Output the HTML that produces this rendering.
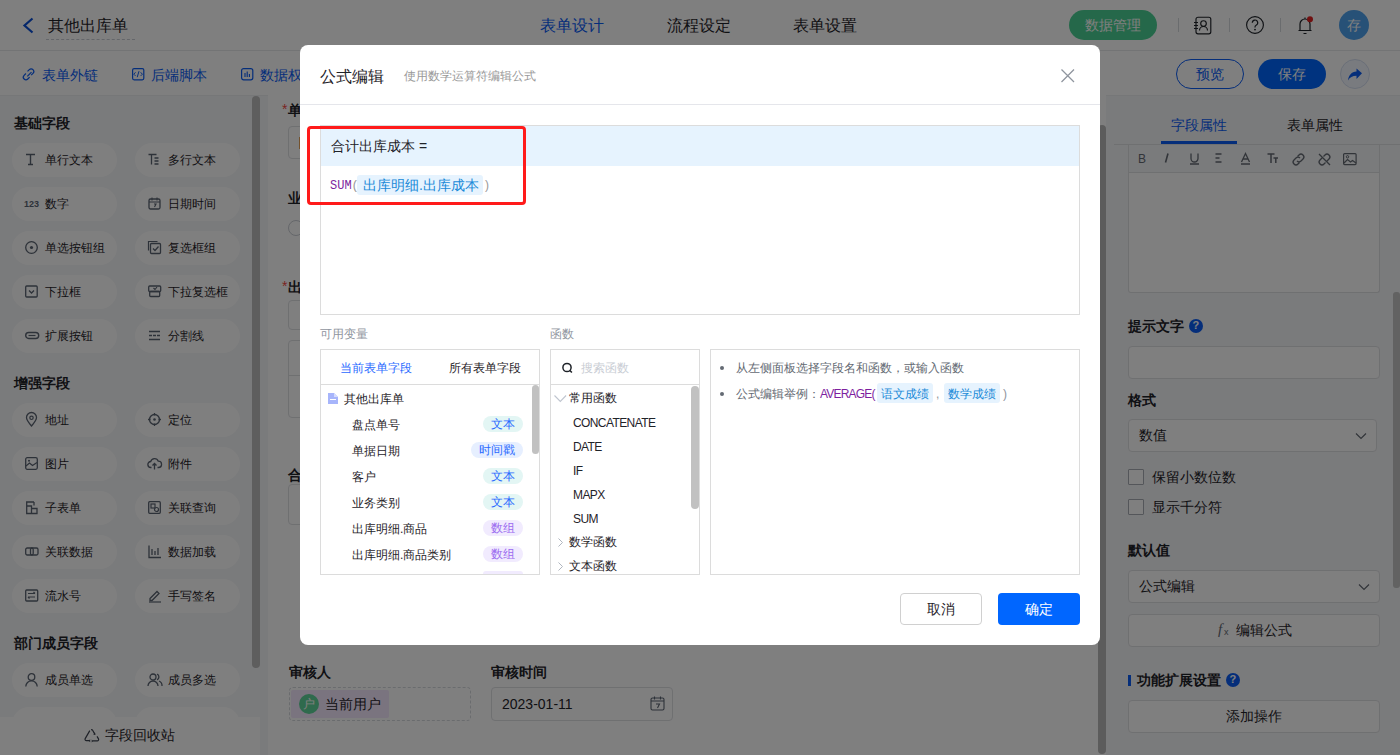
<!DOCTYPE html>
<html><head><meta charset="utf-8">
<style>
*{box-sizing:border-box;margin:0;padding:0}
html,body{width:1400px;height:755px;overflow:hidden;background:#fff;font-family:"Liberation Sans",sans-serif;color:#1f2329}
.a{position:absolute}
.t{position:absolute;white-space:nowrap;line-height:1}
svg{position:absolute;overflow:visible}
#hdr{left:0;top:0;width:1400px;height:51px;background:#fff;border-bottom:1px solid #e6e8eb}
#tb{left:0;top:51px;width:1400px;height:45px;background:#fff}
#side{left:0;top:95px;width:268px;height:660px;background:#f5f6f8;box-shadow:inset 0 1px 0 #eceef1}
.sec{position:absolute;left:14px;font-size:14px;font-weight:bold;color:#1f2329;line-height:14px}
.pill{position:absolute;width:105px;height:34px;border-radius:17px;background:#fff}
.pill span{position:absolute;left:33px;top:11px;font-size:12px;line-height:12px;color:#1f2329;white-space:nowrap}
.pill svg{left:13px;top:10px}
#main{left:268px;top:95px;width:832px;height:660px;background:#fff}
#right{left:1106px;top:95px;width:294px;height:660px;background:#f5f6f8;box-shadow:inset 0 1px 0 #eceef1}
#ov{left:0;top:0;width:1400px;height:755px;background:rgba(0,0,0,.5)}
#modal{left:300px;top:45px;width:800px;height:600px;background:#fff;border-radius:8px}
</style></head><body>
<div id="hdr" class="a">
<svg width="12" height="16" style="left:22px;top:17px"><path d="M10.5 1.5 L2.5 8.5 L10.5 15.5" fill="none" stroke="#0a4fd6" stroke-width="2.2"/></svg>
<div class="t" style="left:48px;top:18px;font-size:16px;color:#1f2329">其他出库单</div>
<div class="a" style="left:46px;top:39px;width:89px;border-top:1px dashed #c9cdd4"></div>
<div class="t" style="left:540px;top:18px;font-size:16px;color:#0a5cf5">表单设计</div>
<div class="t" style="left:667px;top:18px;font-size:16px;color:#1f2329">流程设定</div>
<div class="t" style="left:793px;top:18px;font-size:16px;color:#1f2329">表单设置</div>
<div class="a" style="left:1069px;top:10px;width:88px;height:30px;border-radius:15px;background:#4bd194"></div>
<div class="t" style="left:1085px;top:18px;font-size:14px;color:#fff">数据管理</div>
<div class="a" style="left:1178px;top:18px;width:1px;height:14px;background:#d5d8dc"></div>
<div class="a" style="left:1229px;top:18px;width:1px;height:14px;background:#d5d8dc"></div>
<div class="a" style="left:1280px;top:18px;width:1px;height:14px;background:#d5d8dc"></div>
<svg width="20" height="20" style="left:1193px;top:16px"><rect x="3" y="1.2" width="14.8" height="16.6" rx="2" stroke="#1f2329" stroke-width="1.15" fill="none"/><path d="M1 6.5h4M1 9.5h4M1 12.5h4" stroke="#1f2329" stroke-width="1.2"/><circle cx="10.5" cy="7.5" r="2.8" stroke="#1f2329" stroke-width="1.15" fill="none"/><path d="M6.5 14.5a4 4 0 0 1 8 0" stroke="#1f2329" stroke-width="1.15" fill="none"/></svg>
<svg width="20" height="20" style="left:1245px;top:15px"><circle cx="10" cy="10" r="8.4" stroke="#1f2329" stroke-width="1.15" fill="none"/><path d="M7.3 7.7a2.7 2.7 0 1 1 3.8 2.5c-0.8 0.4-1.1 0.9-1.1 1.8v0.6" stroke="#1f2329" stroke-width="1.2" fill="none"/><circle cx="10" cy="14.6" r="0.9" fill="#1f2329"/></svg>
<svg width="20" height="20" style="left:1295px;top:15px"><path d="M3.5 15.5h13M5 15.5V9a5 5 0 0 1 10 0v6.5M8.5 18.5h3M10 2.5v1.5" stroke="#1f2329" stroke-width="1.2" fill="none"/><circle cx="15" cy="4.3" r="3" fill="#e02020"/></svg>
<div class="a" style="left:1339px;top:10px;width:30px;height:30px;border-radius:15px;background:#4ea2ee"></div>
<div class="t" style="left:1347px;top:18px;font-size:14px;color:#fff">存</div>
</div>
<div id="tb" class="a">
<svg width="14" height="14" style="left:22px;top:17px"><path d="M5.2 4.2l1.8-1.8a2.6 2.6 0 0 1 3.7 3.7L8.9 7.9M7.3 10l-1.8 1.8a2.6 2.6 0 0 1-3.7-3.7L3.6 6.3M5 9.2l4.2-4.2" stroke="#0a5cf5" stroke-width="1.2" fill="none" transform="translate(0.3,-0.8)"/></svg>
<svg width="13" height="13" style="left:132px;top:17px"><rect x="0.6" y="0.6" width="11.2" height="11.2" rx="1.5" stroke="#0a5cf5" stroke-width="1.2" fill="none"/><path d="M3.5 4.3L1.8 6.2l1.7 1.7M8.7 4.3l1.7 1.9-1.7 1.7M7 3.2L5.2 9.2" stroke="#0a5cf5" stroke-width="1" fill="none"/></svg>
<svg width="13" height="13" style="left:241px;top:17px"><rect x="0.6" y="0.6" width="11.2" height="11.2" rx="2" stroke="#0a5cf5" stroke-width="1.2" fill="none"/><path d="M4 5v4M6.2 3.5v5.5M8.4 6v3" stroke="#0a5cf5" stroke-width="1.1" fill="none"/></svg>
<div class="t" style="left:42px;top:17px;font-size:14px;color:#0a5cf5">表单外链</div>
<div class="t" style="left:151px;top:17px;font-size:14px;color:#0a5cf5">后端脚本</div>
<div class="t" style="left:260px;top:17px;font-size:14px;color:#0a5cf5">数据权限</div>
<div class="a" style="left:1176px;top:8px;width:68px;height:30px;border-radius:15px;border:1px solid #0a5cf5"></div>
<div class="t" style="left:1196px;top:16px;font-size:14px;color:#0a5cf5">预览</div>
<div class="a" style="left:1258px;top:8px;width:68px;height:30px;border-radius:15px;background:#0066ff"></div>
<div class="t" style="left:1278px;top:16px;font-size:14px;color:#fff">保存</div>
<div class="a" style="left:1340px;top:8px;width:30px;height:30px;border-radius:15px;background:#f2f7ff;border:1px solid #d5def0"></div>
<svg width="16" height="14" style="left:1347px;top:17px"><path d="M15 5.3L9.5 0.5v3C4.5 3.8 1.5 7.3 1 12.5c1.8-3.2 4.5-4.7 8.5-4.7v3.2z" fill="#0a5cf5"/></svg>
</div>
<div id="side" class="a">
<div class="sec" style="top:21px">基础字段</div>
<div class="sec" style="top:281px">增强字段</div>
<div class="sec" style="top:541px">部门成员字段</div>
<div class="pill" style="left:12px;top:48px"><svg width="14" height="14" style="left:13px;top:10px"><path d="M1 1.5h9M5.5 1.5v10M3 11.5h5" stroke="#5b6472" stroke-width="1.4" fill="none"/></svg><span>单行文本</span></div>
<div class="pill" style="left:135px;top:48px"><svg width="14" height="14" style="left:13px;top:10px"><path d="M0.5 1.5h8M3.5 1.5v10M6.5 5h4M6.5 8h4M6.5 11h4" stroke="#5b6472" stroke-width="1.3" fill="none"/></svg><span>多行文本</span></div>
<div class="pill" style="left:12px;top:92px"><svg width="14" height="14" style="left:13px;top:10px"><text x="-1" y="10" font-size="9" font-weight="bold" fill="#5b6472" font-family="Liberation Sans">123</text></svg><span>数字</span></div>
<div class="pill" style="left:135px;top:92px"><svg width="14" height="14" style="left:13px;top:10px"><rect x="1" y="2" width="11" height="10" rx="1.5" stroke="#5b6472" stroke-width="1.3" fill="none"/><path d="M1 5h11M4 0.5v3M9 0.5v3M6 7h2l-1.5 3" stroke="#5b6472" stroke-width="1.1" fill="none"/></svg><span>日期时间</span></div>
<div class="pill" style="left:12px;top:136px"><svg width="14" height="14" style="left:13px;top:10px"><circle cx="6.5" cy="6.5" r="5.8" stroke="#5b6472" stroke-width="1.3" fill="none"/><circle cx="6.5" cy="6.5" r="1.6" fill="#5b6472"/></svg><span>单选按钮组</span></div>
<div class="pill" style="left:135px;top:136px"><svg width="14" height="14" style="left:13px;top:10px"><path d="M0.5 9.5v-9h9" stroke="#5b6472" stroke-width="1.2" fill="none"/><rect x="2.5" y="2.5" width="10" height="10" rx="1" stroke="#5b6472" stroke-width="1.3" fill="none"/><path d="M5 7.5l2 2 3.5-4" stroke="#5b6472" stroke-width="1.3" fill="none"/></svg><span>复选框组</span></div>
<div class="pill" style="left:12px;top:180px"><svg width="14" height="14" style="left:13px;top:10px"><rect x="0.7" y="1" width="11.5" height="11" rx="1" stroke="#5b6472" stroke-width="1.3" fill="none"/><path d="M4 5.5l2.5 2.5 2.5-2.5" stroke="#5b6472" stroke-width="1.3" fill="none"/></svg><span>下拉框</span></div>
<div class="pill" style="left:135px;top:180px"><svg width="14" height="14" style="left:13px;top:10px"><rect x="0.7" y="1" width="12" height="5.5" rx="1" stroke="#5b6472" stroke-width="1.3" fill="none"/><rect x="1.7" y="6.5" width="10" height="5" rx="1" stroke="#5b6472" stroke-width="1.3" fill="none"/><path d="M5.5 3l1.5 1.5 2-2.5" stroke="#5b6472" stroke-width="1.1" fill="none"/></svg><span>下拉复选框</span></div>
<div class="pill" style="left:12px;top:224px"><svg width="14" height="14" style="left:13px;top:10px"><rect x="0.7" y="3.5" width="13" height="6" rx="3" stroke="#5b6472" stroke-width="1.4" fill="none"/><path d="M3.5 6.5h7" stroke="#5b6472" stroke-width="1.2"/></svg><span>扩展按钮</span></div>
<div class="pill" style="left:135px;top:224px"><svg width="14" height="14" style="left:13px;top:10px"><path d="M1 2.5h11M1 10.5h11M1 6.5h3M5 6.5h3M9 6.5h3" stroke="#5b6472" stroke-width="1.3" fill="none"/></svg><span>分割线</span></div>
<div class="pill" style="left:12px;top:308px"><svg width="14" height="14" style="left:13px;top:10px"><path d="M6.5 13c-3-3.5-5-6-5-8.5a5 5 0 0 1 10 0c0 2.5-2 5-5 8.5z" stroke="#5b6472" stroke-width="1.3" fill="none"/><circle cx="6.5" cy="4.8" r="1.7" stroke="#5b6472" stroke-width="1.2" fill="none"/></svg><span>地址</span></div>
<div class="pill" style="left:135px;top:308px"><svg width="14" height="14" style="left:13px;top:10px"><circle cx="6.5" cy="6.5" r="5" stroke="#5b6472" stroke-width="1.3" fill="none"/><circle cx="6.5" cy="6.5" r="1.3" fill="#5b6472"/><path d="M6.5 0v2.5M6.5 10.5v2.5M0 6.5h2.5M10.5 6.5h2.5" stroke="#5b6472" stroke-width="1.3"/></svg><span>定位</span></div>
<div class="pill" style="left:12px;top:352px"><svg width="14" height="14" style="left:13px;top:10px"><rect x="0.7" y="0.7" width="11.6" height="11.6" rx="1.5" stroke="#5b6472" stroke-width="1.3" fill="none"/><path d="M1 9l3.5-3 3 2.5 4.5-3" stroke="#5b6472" stroke-width="1.2" fill="none"/><circle cx="4" cy="3.8" r="1" fill="#5b6472"/></svg><span>图片</span></div>
<div class="pill" style="left:135px;top:352px"><svg width="14" height="14" style="left:13px;top:10px"><path d="M3.5 10.5h-0.5a3 3 0 0 1 -0.3-6a4 4 0 0 1 7.6-0.3a3 3 0 0 1 0.2 6.3h-1" stroke="#5b6472" stroke-width="1.3" fill="none"/><path d="M6.5 12.5v-6M4.5 8.5l2-2 2 2" stroke="#5b6472" stroke-width="1.3" fill="none"/></svg><span>附件</span></div>
<div class="pill" style="left:12px;top:396px"><svg width="14" height="14" style="left:13px;top:10px"><path d="M9 1H1.7v11.5H12V7.5H6.5v5M1.7 5H6.5v7.5" stroke="#5b6472" stroke-width="1.3" fill="none"/><path d="M9 1v3.5" stroke="#5b6472" stroke-width="1.3"/></svg><span>子表单</span></div>
<div class="pill" style="left:135px;top:396px"><svg width="14" height="14" style="left:13px;top:10px"><rect x="0.7" y="0.7" width="11.6" height="11.6" rx="1" stroke="#5b6472" stroke-width="1.3" fill="none"/><rect x="3" y="3" width="4" height="4" stroke="#5b6472" stroke-width="1.2" fill="none"/><circle cx="8.5" cy="8.5" r="2" stroke="#5b6472" stroke-width="1.2" fill="none"/></svg><span>关联查询</span></div>
<div class="pill" style="left:12px;top:440px"><svg width="14" height="14" style="left:13px;top:10px"><rect x="0.7" y="3" width="7.5" height="7" rx="1.5" stroke="#5b6472" stroke-width="1.3" fill="none"/><rect x="5.5" y="3" width="7.5" height="7" rx="1.5" stroke="#5b6472" stroke-width="1.3" fill="none"/></svg><span>关联数据</span></div>
<div class="pill" style="left:135px;top:440px"><svg width="14" height="14" style="left:13px;top:10px"><path d="M1 0.5v12h12M4 4v6M7 6v4M10 3v7" stroke="#5b6472" stroke-width="1.3" fill="none"/></svg><span>数据加载</span></div>
<div class="pill" style="left:12px;top:484px"><svg width="14" height="14" style="left:13px;top:10px"><rect x="0.7" y="1" width="12" height="11" rx="1" stroke="#5b6472" stroke-width="1.3" fill="none"/><path d="M3 4.5h7M3 8h7M8.5 3l1.5 1.5M4.5 9.5L3 8" stroke="#5b6472" stroke-width="1.2" fill="none"/></svg><span>流水号</span></div>
<div class="pill" style="left:135px;top:484px"><svg width="14" height="14" style="left:13px;top:10px"><path d="M2 9.5l7-7 2 2-7 7H2z" stroke="#5b6472" stroke-width="1.3" fill="none"/><path d="M1 13h12" stroke="#5b6472" stroke-width="1.2"/></svg><span>手写签名</span></div>
<div class="pill" style="left:12px;top:568px"><svg width="14" height="14" style="left:13px;top:10px"><circle cx="6.5" cy="4" r="3.3" stroke="#5b6472" stroke-width="1.3" fill="none"/><path d="M0.8 13.5a5.7 5.7 0 0 1 11.4 0" stroke="#5b6472" stroke-width="1.3" fill="none"/></svg><span>成员单选</span></div>
<div class="pill" style="left:135px;top:568px"><svg width="14" height="14" style="left:13px;top:10px"><circle cx="5" cy="4" r="3" stroke="#5b6472" stroke-width="1.3" fill="none"/><path d="M0 13a5 5 0 0 1 10 0M9 1.2a3 3 0 0 1 0 5.6M11 8a5 5 0 0 1 3 5" stroke="#5b6472" stroke-width="1.3" fill="none"/></svg><span>成员多选</span></div>
<div class="pill" style="left:12px;top:612px"><svg width="14" height="14" style="left:13px;top:10px"></svg><span>部门单选</span></div>
<div class="pill" style="left:135px;top:612px"><svg width="14" height="14" style="left:13px;top:10px"></svg><span>部门多选</span></div>
<div class="a" style="left:252px;top:1px;width:8px;height:572px;border-radius:4px;background:#bcbcbc"></div>
<div class="a" style="left:0;top:622px;width:260px;height:38px;background:#fff"></div>
<svg width="16" height="14" style="left:84px;top:634px"><path d="M5.8 1.6L1.2 9.6a1.4 1.4 0 0 0 1.2 2.1h3.2M7.2 0.9l0.4-0.2a1.2 1.2 0 0 1 1 0.6l2.5 4.3M13 7.4l1.5 2.5a1.4 1.4 0 0 1-1.2 2H8.6" stroke="#3d4350" stroke-width="1.2" fill="none"/><path d="M4.6 11.7l1.6-1.5v3zM10.8 3.2l0.6 2.2-2.1 0.4zM9.2 11.9l-1.5 1.5v-3z" fill="#3d4350"/></svg>
<div class="t" style="left:105px;top:633px;font-size:14px">字段回收站</div>
</div>
<div id="main" class="a">
<div class="t" style="left:14px;top:7px;font-size:14px;color:#f54a45">*</div>
<div class="t" style="left:20px;top:8px;font-size:14px;font-weight:bold;color:#1f2329">单据编号</div>
<div class="a" style="left:20px;top:31px;width:400px;height:33px;border:1px solid #dee0e3;border-radius:4px;background:#fff"></div>
<div class="a" style="left:31px;top:42px;width:2px;height:12px;background:#e8a45a"></div>
<div class="t" style="left:20px;top:96px;font-size:14px;font-weight:bold;color:#1f2329">业务类别</div>
<div class="a" style="left:20px;top:125px;width:16px;height:16px;border:1px solid #c9cdd4;border-radius:50%"></div>
<div class="t" style="left:14px;top:184px;font-size:14px;color:#f54a45">*</div>
<div class="t" style="left:20px;top:185px;font-size:14px;font-weight:bold;color:#1f2329">出库明细</div>
<div class="a" style="left:20px;top:205px;width:400px;height:30px;border:1px solid #dee0e3;border-radius:4px"></div>
<div class="a" style="left:20px;top:245px;width:400px;height:78px;border:1px solid #dee0e3;border-radius:4px"></div>
<div class="a" style="left:20px;top:280px;width:400px;height:1px;background:#dee0e3"></div>
<div class="t" style="left:20px;top:373px;font-size:14px;font-weight:bold;color:#1f2329">合计出库成本</div>
<div class="a" style="left:20px;top:389px;width:400px;height:41px;border:1px solid #dee0e3;border-radius:4px"></div>
<div class="t" style="left:21px;top:570px;font-size:14px;font-weight:bold;color:#1f2329">审核人</div>
<div class="t" style="left:223px;top:570px;font-size:14px;font-weight:bold;color:#1f2329">审核时间</div>
<div class="a" style="left:21px;top:592px;width:182px;height:34px;border:1px dashed #d5d8dd;border-radius:4px"></div>
<div class="a" style="left:23px;top:595px;width:98px;height:28px;border-radius:2px;background:#f5e8ff"></div>
<div class="a" style="left:31px;top:599px;width:20px;height:20px;border-radius:50%;background:#5fd49a"></div>
<div class="t" style="left:35px;top:603px;font-size:12px;color:#fff">户</div>
<div class="t" style="left:57px;top:602px;font-size:14px;color:#1f2329">当前用户</div>
<div class="a" style="left:223px;top:592px;width:182px;height:34px;border:1px solid #dee0e3;border-radius:4px"></div>
<div class="t" style="left:234px;top:602px;font-size:14px;color:#1f2329">2023-01-11</div>
<svg width="16" height="16" style="left:382px;top:601px"><rect x="1" y="2" width="13" height="12" rx="1.5" stroke="#5b6472" stroke-width="1.1" fill="none"/><path d="M1 5h13M4.5 0.5v3M10.5 0.5v3M6 8h3.5l-2 4" stroke="#5b6472" stroke-width="1.1" fill="none"/></svg>
</div>
<div class="a" style="left:1098px;top:125px;width:8px;height:629px;border-radius:4px;background:#b8b8b8"></div>
<div id="right" class="a">
<div class="t" style="left:65px;top:23px;font-size:14px;color:#0a5cf5">字段属性</div>
<div class="t" style="left:181px;top:23px;font-size:14px;color:#1f2329">表单属性</div>
<div class="a" style="left:55px;top:46px;width:76px;height:3px;background:#0a5cf5"></div>
<div class="a" style="left:22px;top:49px;width:252px;height:149px;border:1px solid #dee0e3;border-top:none;border-radius:0 0 3px 3px;background:#fff"></div>
<div class="a" style="left:23px;top:49px;width:250px;height:29px;background:#f5f6f8;border-bottom:1px solid #dee0e3"></div>
<div class="a" style="left:8px;top:49px;width:286px;height:1px;background:#dee0e3"></div>
<svg width="14" height="12" style="left:32px;top:58px"><text x="0" y="10" font-size="12" fill="#646a73" font-family="Liberation Sans">B</text></svg>
<svg width="14" height="12" style="left:58px;top:58px"><path d="M4 0.5L1.5 9.5" stroke="#646a73" stroke-width="1.6"/></svg>
<svg width="14" height="12" style="left:84px;top:58px"><path d="M1 0.5v5a3.5 3.5 0 0 0 7 0v-5M0 11h9" stroke="#646a73" stroke-width="1.3" fill="none"/></svg>
<svg width="14" height="12" style="left:109px;top:58px"><path d="M0.5 1h6M0.5 5h4M0.5 9h6" stroke="#646a73" stroke-width="1.3" fill="none"/></svg>
<svg width="14" height="12" style="left:135px;top:58px"><path d="M0.5 9L4.5 0.5L8.5 9M2 6h5M0 11h9" stroke="#646a73" stroke-width="1.3" fill="none"/></svg>
<svg width="14" height="12" style="left:161px;top:58px"><path d="M0.5 1h7M4 1v9M6.5 5h4.5M8.8 5v5" stroke="#646a73" stroke-width="1.5" fill="none"/></svg>
<svg width="14" height="12" style="left:186px;top:58px"><path d="M5.5 3.5l1.5-1.5a2.8 2.8 0 0 1 4 4l-2 2a2.8 2.8 0 0 1-4 0M7.5 9.5l-1.5 1.5a2.8 2.8 0 0 1-4-4l2-2a2.8 2.8 0 0 1 4 0" stroke="#646a73" stroke-width="1.3" fill="none"/></svg>
<svg width="14" height="12" style="left:212px;top:58px"><path d="M5.5 3.5l1.5-1.5a2.8 2.8 0 0 1 4 4l-2 2M7.5 9.5l-1.5 1.5a2.8 2.8 0 0 1-4-4l2-2M1 1l11 11" stroke="#646a73" stroke-width="1.3" fill="none"/></svg>
<svg width="14" height="12" style="left:237px;top:58px"><rect x="0.6" y="0.6" width="12.5" height="11" rx="1" stroke="#646a73" stroke-width="1.2" fill="none"/><path d="M1 10l3.5-3.5 3 2.5 2-1.5 3.5 2.5" stroke="#646a73" stroke-width="1.2" fill="none"/><circle cx="4.5" cy="3.8" r="1.2" stroke="#646a73" stroke-width="1" fill="none"/></svg>
<div class="t" style="left:22px;top:224px;font-size:14px;font-weight:bold;color:#1f2329">提示文字</div>
<div class="a" style="left:83px;top:224px;width:14px;height:14px;border-radius:50%;background:#0a5cf5"></div><div class="t" style="left:86.5px;top:225px;font-size:11px;font-weight:bold;color:#fff">?</div>
<div class="a" style="left:22px;top:251px;width:252px;height:33px;border:1px solid #dee0e3;border-radius:4px;background:#fff"></div>
<div class="t" style="left:22px;top:298px;font-size:14px;font-weight:bold;color:#1f2329">格式</div>
<div class="a" style="left:22px;top:324px;width:249px;height:33px;border:1px solid #dee0e3;border-radius:4px;background:#fff"></div>
<div class="t" style="left:33px;top:333px;font-size:14px;color:#1f2329">数值</div>
<svg width="12" height="8" style="left:249px;top:337px"><path d="M1 1.5l5 5 5-5" stroke="#646a73" stroke-width="1.2" fill="none"/></svg>
<div class="a" style="left:22px;top:374px;width:16px;height:16px;border:1px solid #a8adb5;border-radius:1px;background:#fff"></div>
<div class="t" style="left:46px;top:375px;font-size:14px;color:#1f2329">保留小数位数</div>
<div class="a" style="left:22px;top:404px;width:16px;height:16px;border:1px solid #a8adb5;border-radius:1px;background:#fff"></div>
<div class="t" style="left:46px;top:405px;font-size:14px;color:#1f2329">显示千分符</div>
<div class="t" style="left:22px;top:448px;font-size:14px;font-weight:bold;color:#1f2329">默认值</div>
<div class="a" style="left:22px;top:475px;width:252px;height:33px;border:1px solid #dee0e3;border-radius:4px;background:#fff"></div>
<div class="t" style="left:33px;top:484px;font-size:14px;color:#1f2329">公式编辑</div>
<svg width="12" height="8" style="left:252px;top:488px"><path d="M1 1.5l5 5 5-5" stroke="#646a73" stroke-width="1.2" fill="none"/></svg>
<div class="a" style="left:22px;top:519px;width:252px;height:33px;border:1px solid #dee0e3;border-radius:4px;background:#fff"></div>
<div class="t" style="left:112px;top:527px;font-size:15px;font-style:italic;font-family:'Liberation Serif',serif;color:#646a73">f</div><div class="t" style="left:118px;top:533px;font-size:9px;color:#646a73">x</div>
<div class="t" style="left:130px;top:528px;font-size:14px;color:#1f2329">编辑公式</div>
<div class="a" style="left:22px;top:580px;width:3px;height:11px;background:#0a5cf5"></div>
<div class="t" style="left:31px;top:578px;font-size:14px;font-weight:bold;color:#1f2329">功能扩展设置</div>
<div class="a" style="left:120px;top:578px;width:14px;height:14px;border-radius:50%;background:#0a5cf5"></div><div class="t" style="left:123.5px;top:579px;font-size:11px;font-weight:bold;color:#fff">?</div>
<div class="a" style="left:22px;top:605px;width:252px;height:33px;border:1px solid #dee0e3;border-radius:4px;background:#fff"></div>
<div class="t" style="left:120px;top:614px;font-size:14px;color:#1f2329">添加操作</div>
<div class="a" style="left:287px;top:197px;width:7px;height:296px;border-radius:3px;background:#c4c4c4"></div>
</div>
<div id="ov" class="a"></div>
<div id="modal" class="a">
<div class="t" style="left:20px;top:24px;font-size:16px;color:#1f2329">公式编辑</div>
<div class="t" style="left:104px;top:25px;font-size:12px;color:#999">使用数学运算符编辑公式</div>
<svg width="14" height="14" style="left:761px;top:24px"><path d="M0.5 0.5l12.5 12.5M13 0.5L0.5 13" stroke="#8f959e" stroke-width="1.3"/></svg>
<div class="a" style="left:0px;top:59px;width:800px;height:1px;background:#e5e6eb"></div>
<div class="a" style="left:20px;top:80px;width:760px;height:190px;border:1px solid #dcdcdc;background:#fff"></div>
<div class="a" style="left:21px;top:81px;width:758px;height:40px;background:#e6f3fe"></div>
<div class="t" style="left:31px;top:94px;font-size:14px;color:#1f2329">合计出库成本 =</div>
<div class="t" style="left:30px;top:135px;font-size:12px;font-family:'Liberation Mono',monospace;color:#7e1f9f">SUM<span style="color:#999">(</span></div>
<div class="a" style="left:57px;top:130px;width:126px;height:20px;border-radius:3px;background:#e6f3fe"></div>
<div class="t" style="left:63px;top:133px;font-size:14px;color:#1a8ad8">出库明细.出库成本</div>
<div class="t" style="left:185px;top:134px;font-size:12px;color:#999">)</div>
<div class="a" style="left:7px;top:81px;width:219px;height:79px;border:3px solid #ff1a1a;border-radius:4px"></div>
<div class="t" style="left:20px;top:283px;font-size:12px;color:#8f959e">可用变量</div>
<div class="a" style="left:20px;top:304px;width:220px;height:226px;border:1px solid #dcdcdc"></div>
<div class="t" style="left:40px;top:317px;font-size:12px;color:#2b6bff">当前表单字段</div>
<div class="t" style="left:149px;top:317px;font-size:12px;color:#1f2329">所有表单字段</div>
<div class="a" style="left:21px;top:339px;width:218px;height:1px;background:#dcdcdc"></div>
<svg width="10" height="11" style="left:28px;top:348px"><path d="M0 0h6l4 4v7H0z" fill="#a7b5fb"/><path d="M6 0v4h4" fill="#d5dcfe"/><path d="M2 6.5h6" stroke="#fff" stroke-width="1"/></svg>
<div class="t" style="left:44px;top:348px;font-size:12px;color:#1f2329">其他出库单</div>
<div class="t" style="left:52px;top:374px;font-size:12px;color:#1f2329">盘点单号</div>
<div class="a" style="left:183px;top:371px;width:40px;height:16px;border-radius:8px;background:#e3f6f4"></div>
<div class="t" style="left:191px;top:373px;font-size:12px;color:#2b6bff">文本</div>
<div class="t" style="left:52px;top:400px;font-size:12px;color:#1f2329">单据日期</div>
<div class="a" style="left:171px;top:397px;width:52px;height:16px;border-radius:8px;background:#e6efff"></div>
<div class="t" style="left:179px;top:399px;font-size:12px;color:#2b6bff">时间戳</div>
<div class="t" style="left:52px;top:426px;font-size:12px;color:#1f2329">客户</div>
<div class="a" style="left:183px;top:423px;width:40px;height:16px;border-radius:8px;background:#e3f6f4"></div>
<div class="t" style="left:191px;top:425px;font-size:12px;color:#2b6bff">文本</div>
<div class="t" style="left:52px;top:452px;font-size:12px;color:#1f2329">业务类别</div>
<div class="a" style="left:183px;top:449px;width:40px;height:16px;border-radius:8px;background:#e3f6f4"></div>
<div class="t" style="left:191px;top:451px;font-size:12px;color:#2b6bff">文本</div>
<div class="t" style="left:52px;top:478px;font-size:12px;color:#1f2329">出库明细.商品</div>
<div class="a" style="left:183px;top:475px;width:40px;height:16px;border-radius:8px;background:#f1ebfe"></div>
<div class="t" style="left:191px;top:477px;font-size:12px;color:#9b6cf0">数组</div>
<div class="t" style="left:52px;top:504px;font-size:12px;color:#1f2329">出库明细.商品类别</div>
<div class="a" style="left:183px;top:501px;width:40px;height:16px;border-radius:8px;background:#f1ebfe"></div>
<div class="t" style="left:191px;top:503px;font-size:12px;color:#9b6cf0">数组</div>
<div class="a" style="left:183px;top:526px;width:40px;height:3px;border-radius:8px 8px 0 0;background:#f1ebfe"></div>
<div class="a" style="left:232px;top:340px;width:7px;height:69px;border-radius:4px;background:#c1c1c1"></div>
<div class="t" style="left:250px;top:283px;font-size:12px;color:#8f959e">函数</div>
<div class="a" style="left:250px;top:304px;width:150px;height:226px;border:1px solid #dcdcdc"></div>
<svg width="12" height="12" style="left:262px;top:318px"><circle cx="5" cy="4.5" r="4.1" stroke="#1f2329" stroke-width="1.5" fill="none"/><path d="M7.9 7.5l2 2" stroke="#1f2329" stroke-width="1.6"/></svg>
<div class="t" style="left:281px;top:317px;font-size:12px;color:#c9cdd4">搜索函数</div>
<div class="a" style="left:251px;top:339px;width:148px;height:1px;background:#dcdcdc"></div>
<svg width="13" height="8" style="left:254px;top:350px"><path d="M0.5 0.5l5.8 6 5.8-6" stroke="#bfc5cf" stroke-width="1.1" fill="none"/></svg>
<div class="t" style="left:269px;top:347px;font-size:12px;color:#1f2329">常用函数</div>
<div class="t" style="left:273px;top:371.5px;font-size:12px;letter-spacing:-0.6px;color:#1f2329">CONCATENATE</div>
<div class="t" style="left:273px;top:395.5px;font-size:12px;letter-spacing:-0.6px;color:#1f2329">DATE</div>
<div class="t" style="left:273px;top:419.5px;font-size:12px;letter-spacing:-0.6px;color:#1f2329">IF</div>
<div class="t" style="left:273px;top:443.5px;font-size:12px;letter-spacing:-0.6px;color:#1f2329">MAPX</div>
<div class="t" style="left:273px;top:467.5px;font-size:12px;letter-spacing:-0.6px;color:#1f2329">SUM</div>
<svg width="5" height="9" style="left:258px;top:493px"><path d="M0.5 0.5l4 4-4 4" stroke="#b0b6c0" stroke-width="1" fill="none"/></svg>
<div class="t" style="left:269px;top:491px;font-size:12px;color:#1f2329">数学函数</div>
<svg width="5" height="9" style="left:258px;top:517px"><path d="M0.5 0.5l4 4-4 4" stroke="#b0b6c0" stroke-width="1" fill="none"/></svg>
<div class="t" style="left:269px;top:515px;font-size:12px;color:#1f2329">文本函数</div>
<div class="a" style="left:391px;top:341px;width:8px;height:123px;border-radius:4px;background:#c1c1c1"></div>
<div class="a" style="left:410px;top:304px;width:370px;height:226px;border:1px solid #dcdcdc"></div>
<div class="a" style="left:420px;top:321px;width:4px;height:4px;border-radius:2px;background:#646a73"></div>
<div class="t" style="left:436px;top:317px;font-size:12px;color:#646a73">从左侧面板选择字段名和函数，或输入函数</div>
<div class="a" style="left:420px;top:347px;width:4px;height:4px;border-radius:2px;background:#646a73"></div>
<div class="t" style="left:436px;top:343px;font-size:12px;color:#646a73">公式编辑举例：</div>
<div class="t" style="left:520px;top:343px;font-size:12px;letter-spacing:-0.8px;color:#7e1f9f">AVERAGE(</div>
<div class="a" style="left:577px;top:338px;width:56px;height:20px;border-radius:3px;background:#e6f3fe"></div>
<div class="t" style="left:581px;top:343px;font-size:12px;color:#1a8ad8">语文成绩</div>
<div class="t" style="left:636px;top:343px;font-size:12px;color:#8f959e">,</div>
<div class="a" style="left:644px;top:338px;width:56px;height:20px;border-radius:3px;background:#e6f3fe"></div>
<div class="t" style="left:648px;top:343px;font-size:12px;color:#1a8ad8">数学成绩</div>
<div class="t" style="left:703px;top:343px;font-size:12px;color:#8f959e">)</div>
<div class="a" style="left:600px;top:548px;width:82px;height:32px;border:1px solid #d0d0d0;border-radius:4px"></div>
<div class="t" style="left:627px;top:557px;font-size:14px;color:#1f2329">取消</div>
<div class="a" style="left:698px;top:548px;width:82px;height:32px;border-radius:4px;background:#0066ff"></div>
<div class="t" style="left:725px;top:557px;font-size:14px;color:#fff;font-weight:500">确定</div>
</div>
</body></html>
